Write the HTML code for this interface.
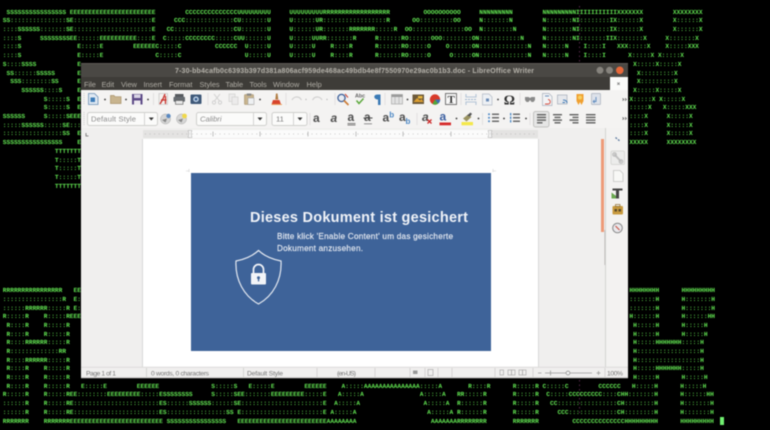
<!DOCTYPE html>
<html>
<head>
<meta charset="utf-8">
<style>
html,body{margin:0;padding:0;background:#000;width:770px;height:430px;overflow:hidden}
#w{position:absolute;left:0;top:0;width:770px;height:430px;overflow:hidden;filter:blur(.6px)}
pre{position:absolute;margin:0;font:bold 6.217px/8.7px "Liberation Mono",monospace;color:#62e652;text-rendering:geometricPrecision;white-space:pre}
svg{position:absolute;left:0;top:0}
svg text{font-family:"Liberation Sans",sans-serif}
</style>
</head>
<body>
<div id="w">
<pre style="left:2.8px;top:8.65px"> SSSSSSSSSSSSSSSS EEEEEEEEEEEEEEEEEEEEEEE        CCCCCCCCCCCCCCUUUUUUUUU     UUUUUUUUURRRRRRRRRRRRRRRRRR         OOOOOOOOOO     NNNNNNNNN        NNNNNNNNNIIIIIIIIIIIXXXXXXX        XXXXXXXX
SS:::::::::::::::SE:::::::::::::::::::::E     CCC:::::::::::::CU:::::::U     U::::::UR:::::::::::::::::R      OO:::::::::OO     N:::::::N        N:::::::NI::::::::IX::::::X        X::::::X
::::SSSSSS:::::::SE:::::::::::::::::::::E   CC::::::::::::::::CU:::::::U     U::::::UR:::::::RRRRRRR:::::R  OO::::::::::::::OO  N::::::::N       N:::::::NI::::::::IX::::::X        X::::::X
::::S     SSSSSSSSEE::::::EEEEEEEEEE::::E  C:::::CCCCCCCC:::::CUU::::::U     U:::::UURR:::::::R     R::::::RO::::::OOO::::::::ON:::::::::::N     N:::::::NI:::::::IIX:::::::X     X:::::::X
::::S               E:::::E        EEEEEEC:::::C         CCCCCC  U:::::U     U:::::U    R::::R      R::::::RO:::::O    O::::::ON:::::::::::::N   N:::::N    I::::I   XXX:::::X    X:::::XXX
::::S               E:::::E              C:::::C                 U:::::U     U:::::U    R::::R      R::::::RO:::::O     O:::::ON:::::::::::::N   N:::::N    I::::I      X:::::X X:::::X</pre>
<pre style="left:2.8px;top:60.85px">S::::SSSS           E
 SS::::::SSSSS      E
  SSS::::::::SS     E
     SSSSSS::::S    E
           S:::::S  E
           S:::::S  E
SSSSSS     S:::::SEEE
:::::SSSSSS:::::SE:::
::::::::::::::::SS  E
SSSSSSSSSSSSSSSS    E
              TTTTTTT
              T:::::T
              T:::::T
              T:::::T
              TTTTTTT











RRRRRRRRRRRRRRRR   EE
::::::::::::::::R  E:
::::::RRRRRR:::::R E:
R:::::R    R:::::REEE
 R::::R    R:::::R
 R::::R    R:::::R
 R::::RRRRRR:::::R
 R:::::::::::::RR
 R::::RRRRRR:::::R
 R::::R    R:::::R
 R::::R    R:::::R</pre>
<pre style="left:629.4px;top:60.85px"> X:::::X:::::X
  X:::::::::X
  X:::::::::X
 X:::::X:::::X
X:::::X X:::::X
:::::X   X:::::XXX
::::X     X:::::X
::::X     X:::::X
::::X     X:::::X
XXXXX     XXXXXXXX
















HHHHHHHH      HHHHHHHHH
:::::::H      H:::::::H
:::::::H      H:::::::H
H::::::H      H::::::HH
 H:::::H      H:::::H
 H:::::H      H:::::H
 H:::::HHHHHHH:::::H
 H:::::::::::::::::H
 H:::::::::::::::::H
 H:::::HHHHHHH:::::H
 H:::::H      H:::::H</pre>
<pre style="left:2.8px;top:382.75px"> R::::R    R:::::R   E:::::E        EEEEEE              S:::::S   E:::::E        EEEEEE    A:::::AAAAAAAAAAAAAAA:::::A       R::::R      R:::::R C:::::C        CCCCCC   H:::::H      H:::::H
R:::::R    R:::::REE::::::::EEEEEEEEE:::::ESSSSSSSS     S:::::SEE:::::::EEEEEEEEE:::::E   A:::::A               A:::::A   RR:::::R       R:::::R  C:::::CCCCCCCCC::::CHH:::::::H      H::::::HH
::::::R    R:::::RE:::::::::::::::::::::::ES::::::SSSSSS::::::SE::::::::::::::::::::::E  A:::::A                 A:::::A  R::::::R       R:::::R   CC::::::::::::::::CH::::::::H      H:::::::H
::::::R    R:::::RE:::::::::::::::::::::::ES::::::::::::::::SS E::::::::::::::::::::::E A:::::A                   A:::::A R::::::R       R:::::R     CCC:::::::::::::CH::::::::H      H:::::::H
RRRRRRR    RRRRRRREEEEEEEEEEEEEEEEEEEEEEEEE SSSSSSSSSSSSSSSS   EEEEEEEEEEEEEEEEEEEEEEEEAAAAAAAA                    AAAAAAARRRRRRRR       RRRRRRR         CCCCCCCCCCCCCCHHHHHHHHH      HHHHHHHHH</pre>

<svg width="770" height="430" viewBox="0 0 770 430" xmlns="http://www.w3.org/2000/svg">
<!-- artefacts -->
<path d="M579.5 6v56M579.5 380v36" stroke="#7a3a6a" stroke-width=".7" stroke-dasharray="1.5 3"/>
<rect x="720" y="417" width="4" height="8" fill="#70f070"/>

<!-- window frame -->
<rect x="81" y="63" width="547" height="315" fill="#f1f0ef"/>
<rect x="81" y="63" width="547" height="27" fill="#3e3c38"/>
<rect x="81" y="63" width="547" height="14" fill="#4a4844"/>
<rect x="81" y="63" width="547" height="1" fill="#5d5a54"/>
<text x="175" y="73" font-size="7" font-weight="bold" fill="#b4b1a9" textLength="359" lengthAdjust="spacing">7-30-bb4cafb0c6393b397d381a806acf959de468ac49bdb4e8f7550970e29ac0b1b3.doc - LibreOffice Writer</text>
<circle cx="600" cy="70.3" r="3.5" fill="#86837d"/>
<circle cx="609.5" cy="70.3" r="3.5" fill="#86837d"/>
<circle cx="619.8" cy="70.3" r="3.8" fill="#e8683a"/>
<g font-size="7.4" fill="#b0ada5">
<text x="84" y="87">File</text><text x="101.500" y="87">Edit</text><text x="121" y="87">View</text><text x="143.500" y="87">Insert</text><text x="169" y="87">Format</text><text x="199.500" y="87">Styles</text><text x="225.500" y="87">Table</text><text x="249.500" y="87">Tools</text><text x="273" y="87">Window</text><text x="306.500" y="87">Help</text>
</g>
<rect x="610" y="77" width="18" height="13" fill="#fbfbfa"/>
<path d="M617.300 82.500l2.400 2.400m0-2.400l-2.400 2.400" stroke="#777" stroke-width=".8"/>

<!-- toolbars background -->
<rect x="81" y="90" width="547" height="38" fill="#f4f3f2"/>
<path d="M84 93v12M84 112v13" stroke="#ccc" stroke-width="1" stroke-dasharray="1 1"/>

<!-- row 1 icons -->
<g>
<path d="M88.500 93.500h6l3.500 3.500v7.500h-9.500z" fill="#dfe8f2" stroke="#6a8fb5" stroke-width=".8"/>
<rect x="90.500" y="97.500" width="4.500" height="4.500" fill="#3c7cb8"/>
<circle cx="105" cy="99.500" r=".9" fill="#333"/>
<path d="M110.500 103.500v-8h3.500l1 1.200h6v6.800z" fill="#c8b48e" stroke="#a8926a" stroke-width=".7"/>
<circle cx="126" cy="99.500" r=".9" fill="#333"/>
<rect x="132" y="94" width="10.500" height="10.500" fill="#5c4a86"/>
<rect x="134" y="94.500" width="6.500" height="3.500" fill="#d8d4e4"/>
<rect x="134" y="100.500" width="6.500" height="4" fill="#eeeaf0"/>
<circle cx="148" cy="99.500" r=".9" fill="#333"/>
<path d="M159 93.500h8.500v11h-8.500z" fill="#f3f0ee" stroke="#bbb" stroke-width=".6"/>
<path d="M160 104c2-3 4-7 5-10m-4 6h5.500M165.500 96v8" stroke="#c8322c" stroke-width="1.300" fill="none"/>
<rect x="175" y="94" width="8.500" height="3" fill="#55595e"/>
<rect x="173.500" y="96.800" width="11.500" height="5" rx="1" fill="#666b70"/>
<rect x="175.500" y="100.500" width="7.500" height="3.800" fill="#e8e8e8" stroke="#555" stroke-width=".6"/>
<rect x="190.500" y="94.500" width="11" height="9.500" rx="1" fill="#3e5878"/>
<circle cx="196" cy="99.200" r="2.800" fill="#bcd0e6"/>
<circle cx="196" cy="99.200" r="1.300" fill="#33598a"/>
<g opacity=".32">
<path d="M214 94l5.500 7M220 94l-5.500 7" stroke="#888" stroke-width="1"/><circle cx="214" cy="102.500" r="1.600" fill="none" stroke="#888"/><circle cx="220" cy="102.500" r="1.600" fill="none" stroke="#888"/>
<rect x="229" y="94" width="6" height="7.500" fill="#ddd" stroke="#888" stroke-width=".7"/><rect x="232" y="97" width="6" height="7.500" fill="#ddd" stroke="#888" stroke-width=".7"/>
</g>
<rect x="244.500" y="94.500" width="9" height="10" rx=".8" fill="#c8b48e" stroke="#a28e68" stroke-width=".6"/>
<rect x="246.800" y="93.500" width="4.500" height="2.200" fill="#888"/>
<rect x="248" y="98" width="6" height="6.500" fill="#eef0f2" stroke="#999" stroke-width=".5"/>
<circle cx="260" cy="99.500" r=".9" fill="#333"/>
<path d="M276 93.500l1.500 0 .8 6h-3z" fill="#b07c42"/>
<path d="M273 100h6.500l1.500 4.500h-9.500z" fill="#d8442c"/>
<rect x="271.500" y="104" width="10.500" height="1" fill="#e8a060"/>
<g opacity=".4" fill="none" stroke="#999" stroke-width="1.100">
<path d="M292 100c1.500-3 5-4 8-2l1.500 2"/><path d="M322 100c-1.500-3-5-4-8-2l-1.500 2"/>
</g>
<circle cx="306" cy="99.500" r=".7" fill="#bbb"/><circle cx="327" cy="99.500" r=".7" fill="#bbb"/>
<circle cx="341.500" cy="98" r="3.600" fill="#e8ecf2" stroke="#3d5f98" stroke-width="1.300"/>
<path d="M344 100.500l4.500 4.500" stroke="#cc7a33" stroke-width="1.600"/>
<path d="M345 94l3 3.500" stroke="#c84030" stroke-width="1"/>
<text x="355" y="97.500" font-size="5.400" font-weight="bold" fill="#666">Abc</text>
<path d="M356.500 100.500l2.500 3 4.500-5" stroke="#5ca83c" stroke-width="1.500" fill="none"/>
<path d="M377.500 94.500h3v10.500h-2.500v-5.500c-4 .2-5.500-4.800-.5-5z" fill="#3b7ab5"/>
<rect x="391.500" y="94.500" width="11" height="9.500" fill="#e2e2e2" stroke="#a8a8a8" stroke-width=".7"/>
<rect x="391.500" y="94.500" width="11" height="2.500" fill="#9a9a9a"/>
<path d="M395 97v7M399 97v7" stroke="#aaa" stroke-width=".6"/>
<circle cx="407.500" cy="99.500" r=".9" fill="#333"/>
<rect x="412.500" y="94.500" width="11.500" height="9.500" fill="#6d5a3a"/>
<path d="M413.500 102l3.500-4 3 2.500 1.500-1.500 2 3z" fill="#e0a030"/><rect x="418" y="96" width="4.500" height="2.500" fill="#e8b640"/>
<circle cx="435" cy="99.500" r="5.200" fill="#d83a2a"/>
<path d="M435 99.500h5.200a5.200 5.200 0 0 1-2.200 4.200z" fill="#3b6fb5"/>
<path d="M435 99.500l3 4.200a5.200 5.200 0 0 1-5.500.3z" fill="#4ea83c"/>
<rect x="445.500" y="93.500" width="11" height="11" fill="#f8f8f8" stroke="#555" stroke-width=".8"/>
<text x="447.500" y="103" font-size="11" font-weight="bold" fill="#333" style="font-family:'Liberation Serif',serif">T</text>
<path d="M466 94v3h10v-3M466 105v-3h10v3" fill="none" stroke="#b4c4d6" stroke-width="1.100"/>
<path d="M465 99.500h12" stroke="#9cb4d0" stroke-width="1" stroke-dasharray="2 1"/>
<path d="M482.500 94h6.500l3 3v8h-9.500z" fill="#edf0f4" stroke="#b0b8c4" stroke-width=".7"/>
<rect x="486" y="98.500" width="3" height="3" fill="#6a8cb8"/>
<circle cx="498" cy="99.500" r=".9" fill="#333"/>
<text x="503.800" y="104.500" font-size="14" font-weight="bold" fill="#2e2e2e" style="font-family:'Liberation Serif',serif">Ω</text>
<path d="M525 97h3.500l1.500 1 1.500-1h3.500v3l-1.500 2h-2l-1.500-2-1.500 2h-2l-1.500-2z" fill="#8a8a8a"/>
<path d="M542.500 93.500h6.500l3 3v9h-9.500z" fill="#f2f3f5" stroke="#a8b0bc" stroke-width=".7"/>
<path d="M548 99.500c3 0 3 4.500 0 4.500h-3" stroke="#d84a3a" stroke-width=".9" fill="none"/><path d="M545 96h4" stroke="#6a8cb8"/>
<rect x="557.500" y="95" width="9.500" height="9" fill="#e6e8ec" stroke="#a4acb8" stroke-width=".7"/>
<path d="M563 100c2.500 0 4 1 4 3m-2-.5h-2.500" stroke="#3b78b5" stroke-width="1" fill="none"/>
<path d="M576.500 94h7v7l-2 4-1.500-3-1.500 3-2-4z" fill="#f0a030"/><circle cx="580" cy="97.500" r="2" fill="#f6d060"/>
<rect x="591.500" y="93.500" width="9" height="11" rx=".6" fill="#dde2ea" stroke="#a8b0bc" stroke-width=".7"/>
<path d="M596 97v4.500h-2.500m1-1.500l-1.300 1.500 1.300 1.500" stroke="#5a88bd" stroke-width=".9" fill="none"/>
<path d="M622.500 98.300l1.400 1.200-1.400 1.200M625 98.300l1.400 1.200-1.400 1.200" stroke="#555" stroke-width=".7" fill="none"/>
<path d="M153.500 93v12M208 93v12M286 93v12M335 93v12M385 93v12M461 93v12M520 93v12" stroke="#e2e1e0" stroke-width="1"/>
</g>

<!-- row 2 -->
<g>
<rect x="87.500" y="112.500" width="70" height="13" rx="2" fill="#fbfbfa" stroke="#cfcfcd"/>
<path d="M144.500 112.500v13" stroke="#d4d4d2"/>
<path d="M148.800 117.500h5l-2.500 3z" fill="#333"/>
<text x="91" y="121.700" font-size="7.600" fill="#8b8b8b" textLength="45" lengthAdjust="spacing">Default Style</text>
<circle cx="165.500" cy="119" r="5" fill="#d4d4d4" stroke="#aaa" stroke-width=".5"/><circle cx="168.500" cy="116" r="2.200" fill="#5a88c0"/><path d="M162 120l5-1.500-1.500 4" fill="#888"/>
<circle cx="181.500" cy="119" r="5" fill="#d6d6d6" stroke="#aaa" stroke-width=".5"/><circle cx="184.500" cy="116" r="2.400" fill="#f0d84a"/><path d="M178 120l5-1.500-1.500 4" fill="#888"/>
<rect x="196.500" y="112.500" width="70" height="13" rx="2" fill="#fbfbfa" stroke="#cfcfcd"/>
<path d="M253.500 112.500v13" stroke="#d4d4d2"/>
<path d="M257.500 117.500h5l-2.500 3z" fill="#333"/>
<text x="200" y="121.700" font-size="7.600" font-style="italic" fill="#8b8b8b">Calibri</text>
<rect x="272" y="112.500" width="35" height="13" rx="2" fill="#fbfbfa" stroke="#cfcfcd"/>
<path d="M293.500 112.500v13" stroke="#d4d4d2"/>
<path d="M297.500 117.500h5l-2.500 3z" fill="#333"/>
<text x="276" y="121.700" font-size="7.600" fill="#777">11</text>
<g font-size="12" fill="#4e4e4e" font-weight="bold">
<text x="313" y="121.800">a</text>
<text x="330.500" y="121.800" font-style="italic">a</text>
<text x="347.500" y="121">a</text>
<text x="364" y="121">a</text>
<text x="382.500" y="121.300">a</text>
<text x="399" y="121">a</text>
<text x="422" y="121" font-style="italic">a</text>
<text x="439.500" y="120.500" fill="#3b5fa0">a</text>
</g>
<path d="M347.500 123.500h8M347.500 125h8" stroke="#555" stroke-width=".8"/>
<path d="M363.500 118h9" stroke="#444" stroke-width="1"/><path d="M364 123.800h8" stroke="#666" stroke-width=".7"/>
<text x="389.300" y="117.500" font-size="8" font-weight="bold" fill="#4a86c4">b</text>
<text x="405.500" y="124" font-size="8" font-weight="bold" fill="#4a86c4">b</text>
<path d="M427.500 119.500l4 4m0-4l-4 4" stroke="#cc2a2a" stroke-width="1.300"/>
<rect x="439.500" y="122.500" width="11.500" height="2.800" fill="#d62c2c"/>
<circle cx="456.500" cy="118.500" r=".9" fill="#333"/>
<path d="M463 118.500l5-4 3.500 2.500-5 4.500z" fill="#9b9462"/><path d="M467 115.500l3.500-3 1.500 1.500-2 2.500z" fill="#555"/>
<rect x="461.500" y="122" width="11.500" height="3.300" fill="#f4e84a"/>
<circle cx="478.500" cy="118.500" r=".9" fill="#333"/>
<g fill="#6a6a6a">
<rect x="492" y="113.500" width="7" height="1.500"/><rect x="492" y="117" width="7" height="1.500"/><rect x="492" y="120.500" width="7" height="1.500"/>
<rect x="513" y="113.500" width="7" height="1.500"/><rect x="513" y="117" width="7" height="1.500"/><rect x="513" y="120.500" width="7" height="1.500"/>
</g>
<g fill="#4a86c4"><circle cx="489" cy="114.300" r="1"/><circle cx="489" cy="117.800" r="1"/><circle cx="489" cy="121.300" r="1"/><rect x="510" y="113" width="1.300" height="2.500"/><rect x="510" y="116.500" width="1.300" height="2.500"/><rect x="510" y="120" width="1.300" height="2.500"/></g>
<circle cx="504" cy="118.500" r=".9" fill="#333"/>
<circle cx="526" cy="118.500" r=".9" fill="#333"/>
<rect x="533.500" y="111.500" width="15.500" height="15.500" rx="2" fill="#e6e6e5" stroke="#c2c2c0"/>
<g fill="#5f5f5f">
<rect x="537" y="114" width="9" height="1.400"/><rect x="537" y="116.700" width="9" height="1.400"/><rect x="537" y="119.400" width="9" height="1.400"/><rect x="537" y="122.100" width="5.500" height="1.400"/>
<rect x="553" y="114" width="9" height="1.400"/><rect x="554.500" y="116.700" width="6" height="1.400"/><rect x="553" y="119.400" width="9" height="1.400"/><rect x="554.500" y="122.100" width="6" height="1.400"/>
<rect x="569.500" y="114" width="9" height="1.400"/><rect x="572.500" y="116.700" width="6" height="1.400"/><rect x="569.500" y="119.400" width="9" height="1.400"/><rect x="572.500" y="122.100" width="6" height="1.400"/>
<rect x="586" y="114" width="9.500" height="1.400"/><rect x="586" y="116.700" width="9.500" height="1.400"/><rect x="586" y="119.400" width="9.500" height="1.400"/><rect x="586" y="122.100" width="9.500" height="1.400"/>
</g>
<path d="M622.500 117.300l1.400 1.200-1.400 1.200M625 117.300l1.400 1.200-1.400 1.200" stroke="#555" stroke-width=".7" fill="none"/>
<path d="M417 113v12M482.500 113v12M530 113v12M310 113v12" stroke="#e2e1e0"/>
</g>

<!-- ruler -->
<rect x="81" y="128" width="524" height="11" fill="#f0efee"/>
<rect x="143" y="130" width="395" height="8" fill="#e4e3e2"/>
<rect x="190" y="130" width="300" height="8" fill="#fbfbfb"/>
<path d="M145 134h43M192 134h296M492 134h44" stroke="#aaa" stroke-width=".8" stroke-dasharray=".8 3.800"/>
<path d="M213 131.500v5M260 131.500v5M308 131.500v5M356 131.500v5M403 131.500v5M451 131.500v5" stroke="#999" stroke-width=".6"/>
<path d="M188 130.500h4l-1 3 1 4h-4l1-4z" fill="#f6f6f6" stroke="#aaa" stroke-width=".5"/>
<path d="M488 130.500h4l-1 3 1 4h-4l1-4z" fill="#f6f6f6" stroke="#aaa" stroke-width=".5"/>
<path d="M86 133v3h2.500" stroke="#666" stroke-width=".8" fill="none"/>

<!-- doc area -->
<rect x="81" y="139" width="524" height="228" fill="#f0efee"/>
<rect x="143" y="139" width="395" height="228" fill="#ffffff"/>
<path d="M142.500 139v228M538.500 139v228" stroke="#d8d8d8"/>
<path d="M189 172v-3M186 171h3M493 172v-3M493 171h3" stroke="#ccc" stroke-width=".6"/>

<!-- image -->
<rect x="191" y="173" width="300" height="178" fill="#3e6399"/>
<text x="250" y="222" font-size="14.500" font-weight="bold" fill="#f0f3f8" textLength="218" lengthAdjust="spacing">Dieses Dokument ist gesichert</text>
<text x="277" y="239" font-size="8.200" fill="#e8ecf3" stroke="#e8ecf3" stroke-width=".15" textLength="176" lengthAdjust="spacing">Bitte klick 'Enable Content' um das gesicherte</text>
<text x="277" y="251" font-size="8.200" fill="#e8ecf3" stroke="#e8ecf3" stroke-width=".15" textLength="86" lengthAdjust="spacing">Dokument anzusehen.</text>
<path d="M258.500 250.500C252.500 256 244 259.500 236 261C235 280 244 296 258.500 304C273 296 282 280 281 261C273 259.500 264.500 256 258.500 250.500Z" fill="none" stroke="#e4e9f1" stroke-width="1.200"/>
<path d="M253.500 273.500v-4a5 5 0 0 1 10 0v4" fill="none" stroke="#f2f4f8" stroke-width="1.700"/>
<rect x="251" y="273" width="15" height="11.500" rx="1" fill="#f2f4f8"/>
<circle cx="258.500" cy="277.800" r="1.500" fill="#3e6399"/><rect x="257.900" y="278" width="1.300" height="3.400" fill="#3e6399"/>

<!-- scroll / sidebar -->
<rect x="601" y="139" width="3" height="93" fill="#ee9a78"/>
<rect x="604.500" y="230" width="3" height="35" fill="#a8a7a5"/>
<path d="M605.500 128v239" stroke="#d4d3d2"/>
<rect x="606" y="128" width="22" height="239" fill="#f3f2f1"/>
<path d="M615.500 137.500l1.500 1.200M618 139.500l1.500 1.200" stroke="#5a789e" stroke-width="1.300"/>
<rect x="611" y="151" width="13.500" height="13.500" rx="1.500" fill="#ececeb" stroke="#d8d8d6"/>
<path d="M614 154l7.500 8" stroke="#c0c0c0" stroke-width="2"/><circle cx="614.500" cy="154.500" r="1.800" fill="none" stroke="#b8b8b8"/><circle cx="621" cy="161.500" r="1.800" fill="none" stroke="#b8b8b8"/>
<path d="M613.500 170.500h6.500l3 3v8h-9.500z" fill="#f8f8f6" stroke="#c4c4c2" stroke-width=".8"/>
<path d="M611.500 198.500v-6l8 6z" fill="#6aa850"/>
<path d="M612.500 188.500h10v2h-3.500v8h-3v-8h-3.500z" fill="#444"/>
<rect x="612.500" y="206" width="10.500" height="8.500" rx="1" fill="#c89a3e"/>
<rect x="615.500" y="204.500" width="4.500" height="2" fill="none" stroke="#8a6a2a" stroke-width=".7"/>
<rect x="614.500" y="209" width="2.500" height="2.500" fill="#5a4a2a"/><rect x="618.500" y="209" width="2.500" height="2.500" fill="#5a4a2a"/>
<circle cx="617.500" cy="228" r="4.800" fill="#e8e8ec" stroke="#888" stroke-width="1"/>
<path d="M615.500 226l4 4" stroke="#c84a3a" stroke-width="1"/>

<!-- status bar -->
<rect x="81" y="367" width="547" height="11" fill="#f0efee"/>
<path d="M81 367.300h547" stroke="#dcdbda"/>
<path d="M81 377.700h547" stroke="#c9c8c6"/>
<path d="M146.500 368v9M243.500 368v9M317 368v9M375 368v9M410 368v9M425 368v9M438 368v9M452 368v9M495 368v9M533 368v9M605 368v9" stroke="#d4d3d2"/>
<g font-size="6.700" fill="#777">
<text x="86" y="375.500" textLength="30" lengthAdjust="spacing">Page 1 of 1</text>
<text x="151" y="375.500" textLength="58" lengthAdjust="spacing">0 words, 0 characters</text>
<text x="247" y="375.500" textLength="36" lengthAdjust="spacing">Default Style</text>
<text x="337" y="375.500" textLength="19" lengthAdjust="spacing">(en-US)</text>
<text x="607" y="375.500" textLength="16" lengthAdjust="spacing">100%</text>
</g>
<rect x="413" y="370.500" width="4.500" height="3.500" fill="#999"/>
<rect x="428" y="369.500" width="5" height="6" fill="none" stroke="#aaa" stroke-width=".7"/>
<g fill="none" stroke="#aaa" stroke-width=".7">
<rect x="500" y="370" width="3.500" height="5"/>
<rect x="508" y="370" width="3.500" height="5"/><rect x="511.500" y="370" width="3.500" height="5"/>
<rect x="519" y="370" width="3.500" height="5"/><rect x="522.500" y="370" width="3.500" height="5"/>
</g>
<path d="M538 373h3.500M545 373h47M550.500 370.500v5M596.500 373h4M598.500 371v4" stroke="#999" stroke-width=".8"/>
<circle cx="568" cy="373" r="1.900" fill="#f4f4f4" stroke="#888" stroke-width=".7"/>
</svg>
</div>
</body>
</html>
